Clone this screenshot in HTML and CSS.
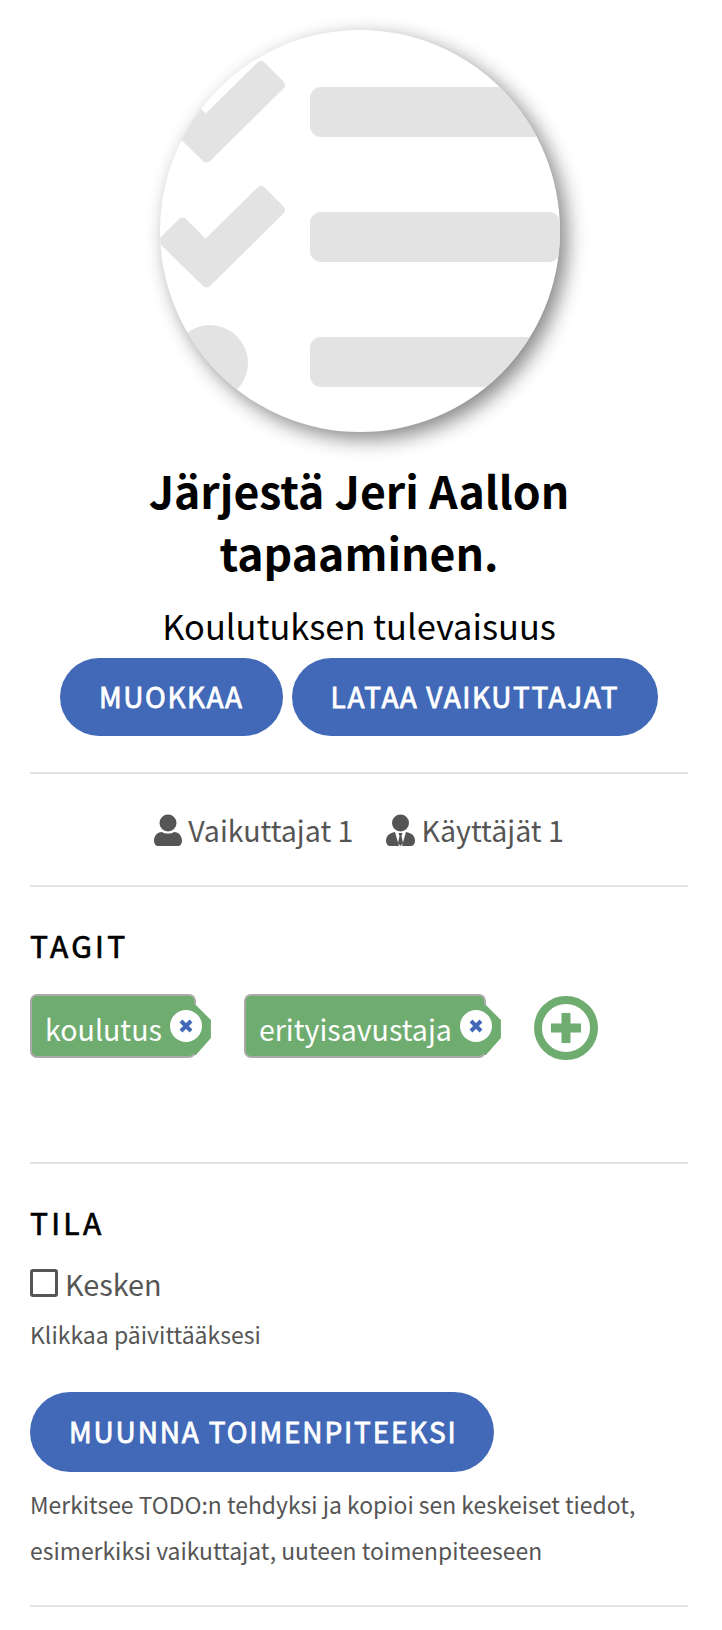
FILE: index.html
```html
<!DOCTYPE html>
<html lang="fi">
<head>
  <meta charset="UTF-8" />
  <title>Järjestä Jeri Aallon tapaaminen.</title>
  <link rel="stylesheet" href="styles.css">
</head>
<body>
  <div class="container">
    <div class="hero">
      <div class="hero-image">
        <svg class="hero-art" viewBox="0 0 400 402" width="400" height="402">
          <g fill="#e3e3e3">
            <rect x="150" y="57" width="270" height="50" rx="11"/>
            <rect x="150" y="182" width="250" height="50" rx="11"/>
            <rect x="150" y="307" width="270" height="50" rx="11"/>
            <circle cx="50" cy="333" r="38"/>
          </g>
          <g fill="#e3e3e3" stroke="#e3e3e3" stroke-width="10" stroke-linejoin="round">
            <polygon points="101,36 120,55 46.500,127.500 4,86 22.500,67.500 45.500,90.500"/>
            <polygon points="101,161 120,180 46.500,252.500 4,211 22.500,192.500 45.500,215.500"/>
          </g>
        </svg>
      </div>
    </div>

    <h1 class="title">Järjestä Jeri Aallon tapaaminen.</h1>
    <p class="subtitle">Koulutuksen tulevaisuus</p>
    <div class="actions">
      <button class="btn">MUOKKAA</button>
      <button class="btn">LATAA VAIKUTTAJAT</button>
    </div>

    <hr class="rule rule-top" />

    <div class="counts">
      <span class="count">
        <svg width="28" height="32" viewBox="0 0 28 32"><circle cx="14" cy="9" r="8.500" fill="#555"/><path d="M0 27 C0 22 3 18 8 18 C11 20 17 20 20 18 C25 18 28 22 28 27 C28 30 26 32 24 32 H4 C2 32 0 30 0 27Z" fill="#555"/></svg>
        Vaikuttajat 1
      </span>
      <span class="count">
        <svg width="29" height="32" viewBox="0 0 29 32"><circle cx="14.500" cy="9" r="8.500" fill="#555"/><path d="M0 27 C0 22 3 19 9 18 L13 32 H4 C2 32 0 30 0 27Z M20 18 C26 19 29 22 29 27 C29 30 27 32 25 32 H16 Z M12.500 19 H16.500 L15.500 22 L17 29 L14.500 32 L12 29 L13.500 22Z" fill="#555"/></svg>
        Käyttäjät 1
      </span>
    </div>

    <hr class="rule" />

    <h2 class="section-title">TAGIT</h2>
    <div class="tags">
      <span class="tag"><span class="tag-label">koulutus</span>
        <span class="tag-remove"><svg width="14" height="14" viewBox="0 0 14 14"><path d="M2 2 L12 12 M12 2 L2 12" stroke="#4169b8" stroke-width="4"/></svg></span>
      </span>
      <span class="tag"><span class="tag-label">erityisavustaja</span>
        <span class="tag-remove"><svg width="14" height="14" viewBox="0 0 14 14"><path d="M2 2 L12 12 M12 2 L2 12" stroke="#4169b8" stroke-width="4"/></svg></span>
      </span>
      <svg class="tag-add" width="64" height="64" viewBox="0 0 64 64"><circle cx="32" cy="32" r="28" fill="none" stroke="#6fac6f" stroke-width="8"/><path d="M32 17 V47 M17 32 H47" stroke="#6fac6f" stroke-width="9"/></svg>
    </div>

    <hr class="rule" />

    <h2 class="section-title">TILA</h2>
    <div class="status"><span class="checkbox"></span>Kesken</div>
    <p class="hint">Klikkaa päivittääksesi</p>
    <button class="btn btn-wide">MUUNNA TOIMENPITEEKSI</button>
    <p class="note">Merkitsee TODO:n tehdyksi ja kopioi sen keskeiset tiedot, esimerkiksi vaikuttajat, uuteen toimenpiteeseen</p>

    <hr class="rule rule-bottom" />
  </div>
</body>
</html>
```

FILE: styles.css
```css
body {
  font-family: 'Noto Sans CJK JP', 'Noto Sans', sans-serif;
  margin: 0;
  background: #fff;
  color: #555;
}

.container {
  padding: 30px 34px 0 30px;
}

.hero {
  display: flex;
  justify-content: center;
  padding-left: 2px;
}

.hero-image {
  width: 400px;
  height: 402px;
  border-radius: 50%;
  overflow: hidden;
  background: #fff;
  box-shadow: 7px 7px 20px rgba(0, 0, 0, 0.48);
}

.hero-art {
  display: block;
  filter: blur(0.5px);
}

.title {
  margin: 27px 0 0;
  font-size: 44.6px;
  line-height: 62px;
  font-weight: 700;
  color: #000;
  text-align: center;
}

.subtitle {
  margin: 17px 0 0;
  font-size: 34.4px;
  line-height: 50px;
  color: #000;
  text-align: center;
}

.actions {
  display: flex;
  justify-content: center;
  gap: 9px;
  margin-top: 8px;
}

.btn {
  font-family: inherit;
  height: 78px;
  padding: 0 39px 3px;
  background: #4169b8;
  color: #fff;
  border: none;
  border-radius: 39px;
  font-size: 28px;
  font-weight: 400;
  letter-spacing: 1.6px;
  -webkit-text-stroke: 0.8px #fff;
}

.rule {
  border: none;
  border-top: 2px solid #e3e3e3;
  margin: 0;
}

.rule-top {
  margin-top: 36px;
}

.rule-bottom {
  margin-top: 32px;
}

.counts {
  display: flex;
  justify-content: center;
  gap: 33px;
  height: 111px;
  box-sizing: border-box;
  align-items: center;
  font-size: 28.6px;
}

.count {
  display: flex;
  align-items: center;
  gap: 6px;
}

.section-title {
  margin: 38px 0 0;
  font-size: 30px;
  line-height: 40px;
  font-weight: 400;
  letter-spacing: 3.3px;
  color: #000;
  -webkit-text-stroke: 0.7px #000;
}

.tags {
  display: flex;
  gap: 33px;
  margin-top: 29px;
  height: 168px;
  align-items: flex-start;
}

.tag {
  position: relative;
  box-sizing: border-box;
  display: flex;
  align-items: center;
  height: 64px;
  margin-right: 15px;
  padding: 0 0 0 13px;
  background: #6fac6f;
  border: 2px solid #aaa;
  border-radius: 7px;
  color: #fff;
  font-size: 28.6px;
  line-height: 40px;
}

.tag-label {
  padding-top: 6px;
}

.tag::after {
  content: "";
  position: absolute;
  left: 100%;
  top: 0;
  width: 17px;
  height: 60px;
  background: #6fac6f;
  clip-path: polygon(0 9px, 2px 9px, 17px 24px, 17px 42px, 2px 59px, 0 59px);
}

.tag-remove {
  position: relative;
  z-index: 1;
  flex: none;
  display: flex;
  align-items: center;
  justify-content: center;
  width: 32px;
  height: 32px;
  margin: 0 -8px 0 8px;
  border-radius: 50%;
  background: #fff;
}

.tag-add {
  flex: none;
  margin-top: 2px;
}

.status {
  display: flex;
  align-items: center;
  gap: 7px;
  height: 28px;
  margin-top: 27px;
  font-size: 28.8px;
}

.checkbox {
  box-sizing: border-box;
  width: 28px;
  height: 28px;
  border: 3px solid #555;
  border-radius: 3px;
}

.hint,
.note {
  color: #555;
}

.hint {
  margin: 22px 0 43px;
  font-size: 23px;
  line-height: 30px;
}

.btn-wide {
  display: block;
  height: 80px;
  padding-right: 36px;
  border-radius: 40px;
  letter-spacing: 1.85px;
}

.note {
  margin: 9px 0 0;
  font-size: 22.9px;
  line-height: 46px;
}
```
